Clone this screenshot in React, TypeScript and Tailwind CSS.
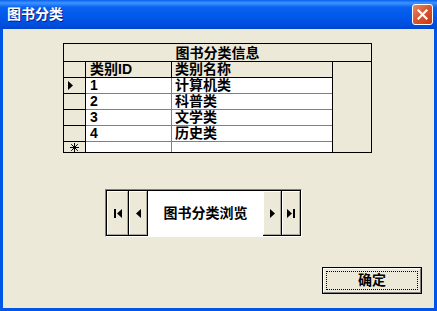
import React from "react";

const rows = [
  { id: "1", name: "计算机类", current: true },
  { id: "2", name: "科普类" },
  { id: "3", name: "文学类" },
  { id: "4", name: "历史类" },
];

const cjk = "font-['Liberation_Sans','Noto_Sans_CJK_SC',sans-serif]";

function Tri({ dir }: { dir: "l" | "r" }) {
  return (
    <svg width="5" height="9" viewBox="0 0 5 9">
      {dir === "r" ? <polygon points="0,0 5,4.5 0,9" fill="#000" /> : <polygon points="5,0 0,4.5 5,9" fill="#000" />}
    </svg>
  );
}

function NavButton({ children, w }: { children: React.ReactNode; w: string }) {
  return (
    <div className={`${w} h-full border-r border-b border-black`}>
      <div className="h-full flex items-center justify-center gap-[1px] border-t border-l border-white border-r border-b border-r-[#aca899] border-b-[#aca899] bg-[#ECE9D8]">
        {children}
      </div>
    </div>
  );
}

export default function App() {
  return (
    <div className={`w-[437px] h-[311px] flex flex-col bg-[#0055E5] ${cjk}`}>
      {/* title bar */}
      <div className="h-[29px] flex items-center justify-between pl-[7px] pr-[4px] bg-[linear-gradient(to_bottom,#0A5FEF_0%,#3D95FF_10%,#0A61F0_25%,#0058EA_60%,#004CDC_90%,#0045CC_100%)]">
        <span className="text-white text-[14px] font-bold [text-shadow:1px_1px_0_#0A1E8C]">图书分类</span>
        <div className="w-[21px] h-[21px] rounded-[3px] border border-white bg-[linear-gradient(135deg,#E8896A_0%,#D9532C_50%,#C23B15_100%)] flex items-center justify-center">
          <svg width="11" height="11" viewBox="0 0 11 11">
            <path d="M1.5 1.5 L9.5 9.5 M9.5 1.5 L1.5 9.5" stroke="#fff" strokeWidth="2.2" strokeLinecap="square" />
          </svg>
        </div>
      </div>

      {/* client area */}
      <div className="flex-1 mx-[3px] mb-[3px] bg-[#ECE9D8] flex flex-col">
        {/* data grid */}
        <div className="mt-[14px] ml-[60px] w-[309px] h-[110px] border border-black bg-[#ECE9D8] flex flex-col text-[14px] font-bold text-black">
          <div className="h-[18px] border-b border-black flex items-center justify-center leading-[16px]">图书分类信息</div>
          <div className="flex-1 flex">
            <div className="w-[269px] border-r border-black flex flex-col">
              <div className="h-[16px] flex border-b border-black">
                <div className="w-[22px] border-r border-black" />
                <div className="w-[86px] border-r border-black pl-[4px] leading-[15px]">类别ID</div>
                <div className="flex-1 pl-[3px] leading-[15px]">类别名称</div>
              </div>
              {rows.map(r => (
                <div key={r.id} className="h-[16px] flex">
                  <div className="w-[22px] border-r border-b border-black flex items-center pl-[4px]">
                    {r.current && <Tri dir="r" />}
                  </div>
                  <div className="w-[86px] bg-white border-r border-b border-[#808080] pl-[4px] leading-[15px]">{r.id}</div>
                  <div className="flex-1 bg-white border-b border-[#808080] pl-[3px] leading-[15px]">{r.name}</div>
                </div>
              ))}
              <div className="flex-1 flex">
                <div className="w-[22px] border-r border-black flex items-start justify-center pt-[1px]">
                  <svg width="9" height="9" viewBox="0 0 9 9">
                    <path d="M4.5 0 V9 M0 4.5 H9 M1.2 1.2 L7.8 7.8 M7.8 1.2 L1.2 7.8" stroke="#000" strokeWidth="1" />
                  </svg>
                </div>
                <div className="w-[86px] bg-white border-r border-[#808080]" />
                <div className="flex-1 bg-white" />
              </div>
            </div>
            <div className="flex-1" />
          </div>
        </div>

        {/* navigator */}
        <div className="mt-[36px] ml-[102px] w-[197px] h-[48px] border-t border-l border-[#808080] border-r border-b border-r-white border-b-white">
          <div className="h-full flex border-t border-l border-black">
            <NavButton w="w-[22px]">
              <div className="w-[2px] h-[9px] bg-black" />
              <Tri dir="l" />
            </NavButton>
            <NavButton w="w-[19px]">
              <Tri dir="l" />
            </NavButton>
            <div className="flex-1 bg-white flex items-center justify-center text-[14px] font-bold">图书分类浏览</div>
            <NavButton w="w-[19px]">
              <Tri dir="r" />
            </NavButton>
            <NavButton w="w-[19px]">
              <Tri dir="r" />
              <div className="w-[2px] h-[9px] bg-black" />
            </NavButton>
          </div>
        </div>

        {/* OK button */}
        <div className="mt-[30px] ml-[319px] w-[100px] h-[27px] border border-black">
          <div className="h-full border-t border-l border-white border-r border-b border-r-[#808080] border-b-[#808080] bg-[#ECE9D8] p-[2px]">
            <div className="h-full border border-dotted border-black flex items-center justify-center text-[14px] font-bold">
              确定
            </div>
          </div>
        </div>
      </div>
    </div>
  );
}
